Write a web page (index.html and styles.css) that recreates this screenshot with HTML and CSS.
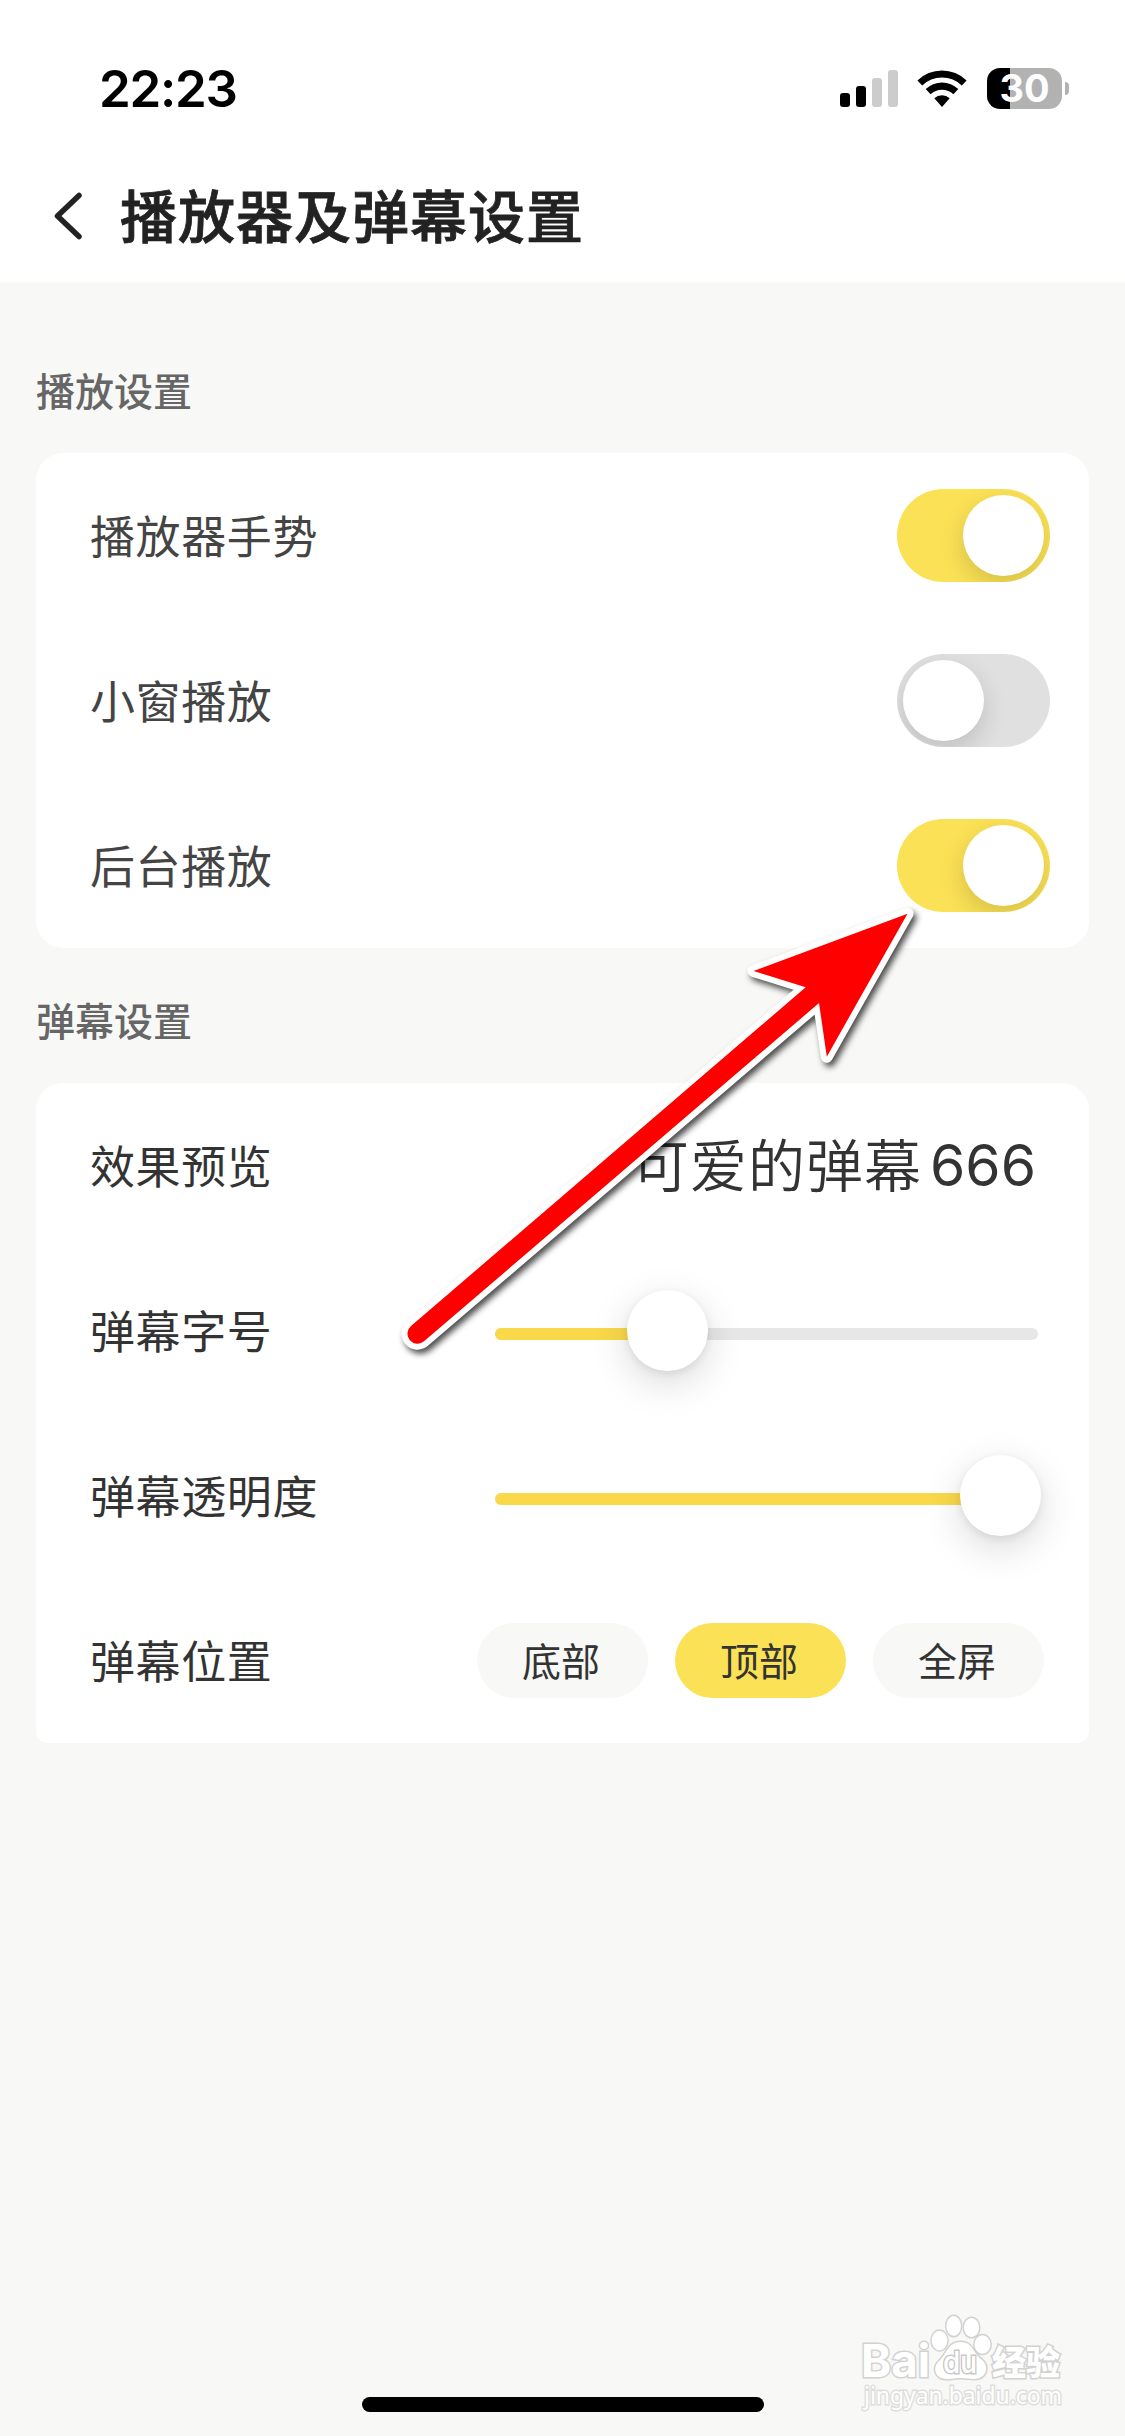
FILE: index.html
```html
<!DOCTYPE html>
<html lang="zh-CN">
<head>
<meta charset="utf-8">
<title>播放器及弹幕设置</title>
<link rel="stylesheet" href="styles.css">
</head>
<body>
<div class="screen">
  <header class="header">
    <div class="status">
      <span class="time">22:23</span>
      <div class="indicators">
        <svg class="signal" viewBox="0 0 58 37"><rect y="23" width="10" height="14" rx="3"/><rect x="16" y="16" width="10" height="21" rx="3"/><rect class="dim" x="32" y="8" width="10" height="29" rx="3"/><rect class="dim" x="48" width="10" height="37" rx="3"/></svg>
        <svg class="wifi" viewBox="0 0 50 37"><path d="M0.4 10.6A35 35 0 0 1 49.6 10.6L44.8 15.6A28.2 28.2 0 0 0 5.2 15.6Z"/><path d="M8.7 19.1A23.3 23.3 0 0 1 41.3 19.1L36.4 24.3A16.4 16.4 0 0 0 13.6 24.3Z"/><path d="M17.3 28.2A11.5 11.5 0 0 1 32.7 28.2L25 37Z"/></svg>
        <div class="battery"><span class="battery-body">30</span><span class="battery-tip"></span></div>
      </div>
    </div>
    <div class="nav">
      <svg class="back" viewBox="0 0 30 50"><path d="M26 4.500L4.500 25L26 45.500"/></svg>
      <h1 class="title">播放器及弹幕设置</h1>
    </div>
  </header>

  <main class="content">
    <h2 class="section-title">播放设置</h2>
    <section class="card">
      <div class="row soft"><span class="label">播放器手势</span><span class="switch on"><i class="knob"></i></span></div>
      <div class="row soft"><span class="label">小窗播放</span><span class="switch"><i class="knob"></i></span></div>
      <div class="row soft"><span class="label">后台播放</span><span class="switch on"><i class="knob"></i></span></div>
    </section>
    <h2 class="section-title">弹幕设置</h2>
    <section class="card card-low">
      <div class="row"><span class="label">效果预览</span><span class="preview"><span class="phrase">可爱的弹幕</span><b class="digits">666</b></span></div>
      <div class="row"><span class="label">弹幕字号</span><div class="slider"><div class="track"></div><div class="fill" style="width:172px"></div><i class="thumb" style="left:132px"></i></div></div>
      <div class="row"><span class="label">弹幕透明度</span><div class="slider"><div class="track"></div><div class="fill" style="width:506px"></div><i class="thumb" style="left:465px"></i></div></div>
      <div class="row"><span class="label">弹幕位置</span><div class="pills"><span class="pill">底部</span><span class="pill active">顶部</span><span class="pill">全屏</span></div></div>
    </section>
  </main>

  <svg class="arrow" viewBox="0 0 560 490"><path d="M527.5 33.7L373.6 91L425.7 107.3L31 446A10 10 0 0 0 44 461.3L439 123L446.8 176.7Z"/></svg>

  <svg class="watermark" viewBox="0 0 240 110">
    <g class="mark">
      <text class="wm-bai" x="21" y="67" textLength="69" lengthAdjust="spacingAndGlyphs">Bai</text>
      <ellipse cx="99.5" cy="30.500" rx="7.800" ry="9.800"/><ellipse cx="113.700" cy="16" rx="7.300" ry="10"/><ellipse cx="131.500" cy="17.500" rx="7.600" ry="9.600"/><ellipse cx="142.500" cy="34.500" rx="8" ry="9.300"/>
      <path d="M120.500 32C108 32 107 44 99 51C92 58 95 69 107 69C113 69 115 68 120.500 68C126 68 130 69 134 69C146 69 150 57 142 50C133 43 133 32 120.500 32Z"/>
      <text class="wm-du" x="103" y="63" textLength="34" lengthAdjust="spacingAndGlyphs">du</text>
      <text class="wm-cn" x="152" y="65" textLength="68" lengthAdjust="spacingAndGlyphs">经验</text>
    </g>
    <text class="wm-url" x="24" y="94" textLength="198" lengthAdjust="spacingAndGlyphs">jingyan.baidu.com</text>
  </svg>
  <div class="home"></div>
</div>
</body>
</html>
```
FILE: styles.css
```css
* { box-sizing: border-box; margin: 0; padding: 0; }
body { font-family: Inter, "Noto Sans CJK SC", sans-serif; background: #f8f8f6; }
.screen { position: relative; width: 1125px; height: 2436px; overflow: hidden; background: #f8f8f6; }

.header { height: 282px; background: #fff; }
.status { display: flex; justify-content: space-between; height: 150px; padding: 48px 56px 0 99px; }
.time { height: 82px; line-height: 82px; font-size: 51px; font-weight: 600; letter-spacing: -1.3px; color: #000; }
.indicators { display: flex; align-items: center; height: 81px; }
.signal { width: 58px; height: 37px; margin-right: 19px; }
.signal .dim { fill: #ccc; }
.wifi { width: 50px; height: 37px; margin-right: 20px; }
.battery { display: flex; align-items: center; gap: 3px; }
.battery-body { width: 75px; height: 41px; border-radius: 13px; background: linear-gradient(90deg, #000 23px, #b2b2b2 23px); color: #fff; font-size: 38px; font-weight: 700; line-height: 41px; text-align: center; }
.battery-tip { width: 4px; height: 13px; border-radius: 0 5px 5px 0; background: #b2b2b2; }
.nav { display: flex; align-items: center; height: 132px; padding: 0 0 0 53px; }
.back { width: 30px; height: 50px; margin-right: 37px; fill: none; stroke: #222; stroke-width: 5.5; stroke-linecap: round; stroke-linejoin: round; }
.title { height: 84px; font-family: "Noto Sans CJK SC", sans-serif; font-size: 57px; font-weight: 500; line-height: 79px; letter-spacing: 1px; color: #222; -webkit-text-stroke: .8px #222; }

.content { display: flex; flex-direction: column; padding: 36px 36px 0; }
.section-title { height: 135px; line-height: 142px; font-family: "Noto Sans CJK SC", sans-serif; font-size: 39px; font-weight: 500; color: #666; }
.card { border-radius: 27px; background: #fff; }
.card-low { border-radius: 27px 27px 12px 12px; }
.row { display: flex; align-items: center; justify-content: space-between; height: 165px; padding: 0 39px 0 54px; color: #333; }
.row.soft { color: #444; }
.label { height: 66px; font-family: "Noto Sans CJK SC", sans-serif; font-size: 45px; line-height: 63px; letter-spacing: .6px; }

.switch { display: flex; width: 153px; height: 93px; padding: 6px; border-radius: 47px; background: #e0e0e0; overflow: hidden; }
.switch.on { justify-content: flex-end; background: #fae155; }
.knob { width: 81px; height: 81px; border-radius: 50%; background: #fff; box-shadow: 0 9px 24px rgba(0,0,0,.15); }

.preview { display: flex; align-items: center; margin-right: 14px; font-size: 57px; line-height: 84px; }
.phrase { height: 84px; font-family: "Noto Sans CJK SC", sans-serif; line-height: 77px; letter-spacing: 1px; font-weight: 350; }
.digits { margin-left: 8px; font-family: Inter, sans-serif; font-weight: 400; }

.slider { position: relative; width: 543px; height: 81px; margin-right: 12px; padding-top: 38px; }
.track { height: 12px; border-radius: 6px; background: #e7e7e7; }
.fill { height: 12px; margin-top: -12px; border-radius: 6px; background: #f9d94a; }
.thumb { position: absolute; top: 0; width: 81px; height: 81px; border-radius: 50%; background: #fff; box-shadow: 0 12px 39px rgba(0,0,0,.15), 0 3px 9px rgba(0,0,0,.08); }

.pills { display: flex; gap: 27px; margin-right: 6px; }
.pill { width: 171px; height: 75px; padding-right: 3px; border-radius: 38px; background: #f8f8f6; font-family: "Noto Sans CJK SC", sans-serif; font-size: 39px; line-height: 72px; text-align: center; }
.pill.active { background: #fae155; }

.arrow { position: absolute; left: 380px; top: 880px; width: 560px; height: 490px; overflow: visible; fill: #f00; stroke: #fff; stroke-width: 12; stroke-linejoin: round; paint-order: stroke; filter: drop-shadow(3px 4px 3px rgba(0,0,0,.7)); }

.watermark { position: absolute; left: 840px; top: 2310px; width: 240px; height: 110px; fill: #fff; stroke: #d2d2d1; stroke-width: 3; paint-order: stroke; }
.wm-bai { font: 700 45px Inter, sans-serif; }
.wm-du { font: 500 30px Inter, sans-serif; stroke: #c8c8c7; }
.wm-cn { font: 900 34px "Noto Sans CJK SC", sans-serif; }
.wm-url { font: 400 24px "Noto Sans", sans-serif; stroke: #dededd; }

.home { position: absolute; left: 362px; bottom: 24px; width: 402px; height: 15px; border-radius: 8px; background: #000; }
```
